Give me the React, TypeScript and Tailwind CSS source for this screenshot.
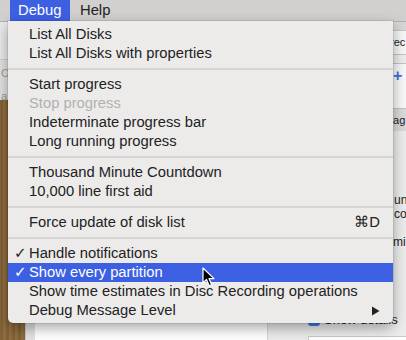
import React from 'react';

type Entry =
  | { type: 'sep' }
  | {
      type: 'item';
      label: string;
      checked?: boolean;
      disabled?: boolean;
      active?: boolean;
      shortcut?: string;
      submenu?: boolean;
    };

const entries: Entry[] = [
  { type: 'item', label: 'List All Disks' },
  { type: 'item', label: 'List All Disks with properties' },
  { type: 'sep' },
  { type: 'item', label: 'Start progress' },
  { type: 'item', label: 'Stop progress', disabled: true },
  { type: 'item', label: 'Indeterminate progress bar' },
  { type: 'item', label: 'Long running progress' },
  { type: 'sep' },
  { type: 'item', label: 'Thousand Minute Countdown' },
  { type: 'item', label: '10,000 line first aid' },
  { type: 'sep' },
  { type: 'item', label: 'Force update of disk list', shortcut: '⌘D' },
  { type: 'sep' },
  { type: 'item', label: 'Handle notifications', checked: true },
  { type: 'item', label: 'Show every partition', checked: true, active: true },
  { type: 'item', label: 'Show time estimates in Disc Recording operations' },
  { type: 'item', label: 'Debug Message Level', submenu: true },
];

const MenuRow = ({ entry }: { entry: Entry }) => {
  if (entry.type === 'sep') {
    return (
      <div className="h-[12px] flex items-center">
        <div className="h-[2px] w-full bg-[#d7d6d5]" />
      </div>
    );
  }

  const color = entry.active
    ? 'bg-[#3d60e3] text-white'
    : entry.disabled
      ? 'text-[#b1b1b1]'
      : 'text-[#222222]';

  return (
    <div className={`h-[19px] flex items-center pl-[6px] pr-[13px] ${color}`}>
      <span className="w-[15px] text-[15px] leading-none font-['DejaVu_Sans',sans-serif]">
        {entry.checked ? '✓' : ''}
      </span>
      <span className="flex-1 text-[14.75px] leading-none whitespace-nowrap">{entry.label}</span>
      {entry.shortcut && <span className="text-[14.75px] leading-none">{entry.shortcut}</span>}
      {entry.submenu && (
        <svg width="9" height="10" viewBox="0 0 9 10">
          <path d="M1 0.5 L8.5 5 L1 9.5 Z" fill="#222" />
        </svg>
      )}
    </div>
  );
};

const Cursor = () => (
  <svg width="14" height="21" viewBox="0 0 14 21" className="absolute left-[202px] top-[267px]">
    <path
      d="M1 1 L1 16 L4.5 12.5 L7.2 18.8 L9.6 17.8 L7 11.6 L12 11.6 Z"
      fill="#000"
      stroke="#fff"
      strokeWidth="1.2"
      strokeLinejoin="round"
    />
  </svg>
);

export default function App() {
  return (
    <div className="relative w-[406px] h-[340px] overflow-hidden bg-[#ececec] font-['Liberation_Sans',Arial,sans-serif]">
      {/* menu bar */}
      <div className="h-[22px] flex items-stretch bg-[#d1d0ce] border-b border-[#b2b2b2] text-[14.75px] text-[#222]">
        <div className="ml-[10px] w-[60px] flex items-center pl-[8px] bg-[#3d60e3] text-white">Debug</div>
        <div className="flex items-center pl-[10px]">Help</div>
      </div>

      {/* window behind the menu */}
      <div className="flex h-[318px]">
        <div className="w-[25px] shrink-0 flex flex-col">
          <div className="h-[38px] bg-[#e9e9e9] border-b border-[#cfcfcf]" />
          <div className="h-[40px] bg-[#e1e1e1] text-[11px] text-[#9a9a9a] pl-[1px] pt-[8px] leading-none">
            <div>OS</div>
            <div className="mt-[12px]">a</div>
          </div>
          <div className="flex-1 bg-[repeating-linear-gradient(90deg,#8a693e_0px,#7b5b33_2px,#957443_4px,#86653a_6px)]" />
        </div>
        <div className="w-[10px] shrink-0 bg-[#e2e2e2] border-l border-[#c9c9c9]" />
        <div className="w-[232px] shrink-0 bg-white" />
        <div className="flex-1 min-w-0 overflow-hidden flex flex-col items-start bg-[#ececec] border-l border-[#d5d5d5] text-[13px] text-[#222]">
          <div className="h-[8px] w-full bg-[#d6d6d6]" />
          <div className="h-[25px] w-[26px] shrink-0 ml-[112px] bg-[#f6f6f6] border border-[#c4c4c4] border-r-0 flex items-center">
            <span className="pl-[9px] text-[11px] leading-none whitespace-nowrap">rec</span>
          </div>
          <div className="h-[8px]" />
          <div className="h-[46px] w-[20px] shrink-0 ml-[118px] bg-[#f8f8f8] border border-[#c4c4c4] border-r-0 relative">
            <span className="absolute left-[6px] top-[4px] text-[#3d6fd6] text-[16px] leading-none font-bold">+</span>
          </div>
          <div className="h-[22px] w-full bg-[#dadada] flex items-center">
            <span className="ml-[119px] text-[11px] leading-none whitespace-nowrap">nag</span>
          </div>
          <div className="h-[62px]" />
          <span className="ml-[126px] text-[12px] leading-[14px] whitespace-nowrap">un</span>
          <span className="ml-[126px] text-[12px] leading-[14px] whitespace-nowrap">co</span>
          <div className="h-[14px]" />
          <span className="ml-[125px] text-[12px] leading-[14px] whitespace-nowrap">mi</span>
          <div className="h-[64px]" />
          <div className="ml-[40px] flex items-center gap-[4px] text-[13px] leading-none whitespace-nowrap">
            <span className="w-[12px] h-[12px] rounded-[3px] bg-[#3f7ae0]" />
            <span>Show details</span>
          </div>
          <div className="flex-1" />
          <div className="ml-[40px] w-[99px] h-[4px] bg-white border border-[#c9c9c9] border-b-0" />
        </div>
      </div>

      {/* the open Debug menu */}
      <div className="absolute left-[8px] top-[21px] w-[385px] pt-[4px] pb-[3px] bg-[#ecebea] rounded-b-[5px] shadow-[0_5px_14px_rgba(0,0,0,0.35),0_0_0_1px_rgba(0,0,0,0.08)]">
        {entries.map((e, i) => (
          <MenuRow key={i} entry={e} />
        ))}
      </div>

      <Cursor />
    </div>
  );
}
